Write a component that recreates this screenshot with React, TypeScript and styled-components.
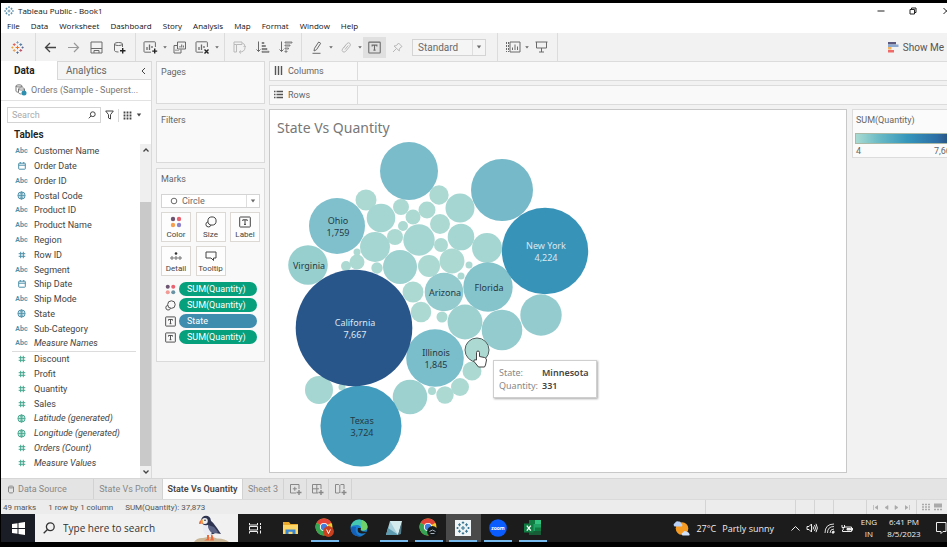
import React from "react";
import styled, { createGlobalStyle, css } from "styled-components";

const ui = `Roboto, Inter, sans-serif`;
const sys = `"Open Sans", "Noto Sans", sans-serif`;
const viz = `"Noto Sans", "Open Sans", sans-serif`;

const Global = createGlobalStyle`
  * { box-sizing: border-box; }
  body { margin: 0; background: #000; font-family: ${ui}; font-size: 9px; color: #444; }
  button, input, select { font: inherit; color: inherit; margin: 0; padding: 0; border: 0; background: none; border-radius: 0; }
  ul { margin: 0; padding: 0; list-style: none; }
  h1, h2 { margin: 0; font-weight: 400; }
  svg { display: block; flex: none; }
`;

const Screen = styled.div`
  display: flex;
  flex-direction: column;
  height: 100vh;
  min-height: 540px;
  padding: 3px 0 5px 1px;
  background: #000;
  overflow: hidden;
`;

/* ---------- title and menus ---------- */
const TitleBar = styled.header`
  display: flex;
  align-items: center;
  flex: none;
  height: 15px;
  padding-left: 3px;
  background: #fff;
  color: #111;
  font-family: ${sys};
`;
const WindowTitle = styled.h1`
  flex: 1;
  padding-left: 4px;
  font-size: 8px;
  line-height: 14px;
`;
const WindowButton = styled.button`
  display: flex;
  justify-content: center;
  width: 32px;
  flex: none;
  &:last-child { width: 18px; justify-content: flex-end; overflow: hidden; }
`;
const MenuBar = styled.nav`
  display: flex;
  align-items: center;
  gap: 11px;
  flex: none;
  height: 15px;
  padding: 0 6px;
  background: #fff;
  color: #111;
  font-family: ${sys};
  font-size: 8px;
`;
const MenuButton = styled.button`
  line-height: 14px;
`;

/* ---------- toolbar ---------- */
const Toolbar = styled.div`
  display: flex;
  flex: none;
  height: 28px;
  background: #f2f2f2;
  color: #666;
`;
const ToolGroup = styled.div<{ $lead?: boolean }>`
  display: flex;
  align-items: center;
  padding: 0 4px 0 3px;
  border-right: 1px solid #dcdcdc;
  ${(p) => p.$lead && css`padding: 0 6px 0 5px;`}
`;
const Tool = styled.button<{ $on?: boolean; $dim?: boolean }>`
  display: flex;
  align-items: center;
  justify-content: center;
  width: 23px;
  height: 21px;
  color: ${(p) => (p.$dim ? "#b9b9b9" : "#6a6a6a")};
  background: ${(p) => (p.$on ? "#e0e0e0" : "transparent")};
`;
const CaretButton = styled.button`
  display: flex;
  justify-content: center;
  width: 6px;
`;
const SelectBox = styled.div<{ $kind: "fit" | "mark" }>`
  position: relative;
  display: flex;
  align-items: center;
  border: 1px solid #d4d4d4;
  background: ${(p) => (p.$kind === "fit" ? "#f5f5f5" : "#fff")};
  color: #6a6a6a;
  ${(p) => p.$kind === "fit"
    ? css`width: 74px; height: 17px; margin: 0 7px 0 3px; font-size: 10px;`
    : css`height: 14px; margin-top: 8px;`}
`;
const Select = styled.select<{ $inset: number }>`
  appearance: none;
  flex: 1;
  min-width: 0;
  height: 100%;
  padding-left: ${(p) => p.$inset}px;
  outline: none;
`;
const SelectMark = styled.span<{ $side: "left" | "right" }>`
  position: absolute;
  top: 0;
  bottom: 0;
  ${(p) => p.$side}: 0;
  display: flex;
  align-items: center;
  justify-content: center;
  width: ${(p) => (p.$side === "left" ? 24 : 13)}px;
  border-left: ${(p) => (p.$side === "right" ? "1px solid #dedede" : "0")};
  pointer-events: none;
`;
const ShowMe = styled.button`
  display: flex;
  align-items: center;
  gap: 4px;
  margin-left: auto;
  padding-right: 3px;
  font-size: 10px;
  color: #555;
`;

/* ---------- work area ---------- */
const Work = styled.div`
  display: flex;
  flex: 1;
  min-height: 0;
  gap: 4px;
  background: #f2f2f2;
`;
const Sidebar = styled.aside`
  display: flex;
  flex-direction: column;
  flex: none;
  width: 151px;
  background: #fff;
  border-right: 1px solid #dadada;
`;
const PaneTabs = styled.div`
  display: flex;
  flex: none;
  height: 19px;
`;
const PaneTab = styled.button<{ $active?: boolean }>`
  display: flex;
  align-items: center;
  flex: ${(p) => (p.$active ? "0 0 56px" : "1")};
  padding-left: ${(p) => (p.$active ? 13 : 8)}px;
  font-size: 10px;
  font-weight: ${(p) => (p.$active ? 700 : 400)};
  color: ${(p) => (p.$active ? "#222" : "#666")};
  background: ${(p) => (p.$active ? "#fff" : "#f5f5f5")};
  border: ${(p) => (p.$active ? "0" : "1px solid #d8d8d8")};
  border-width: ${(p) => (p.$active ? "0" : "1px 0 1px 1px")};
`;
const CollapseButton = styled.button`
  display: flex;
  align-items: center;
  justify-content: center;
  width: 15px;
  background: #f5f5f5;
  border: solid #d8d8d8;
  border-width: 1px 0;
`;
const SourceButton = styled.button`
  display: flex;
  align-items: center;
  gap: 4px;
  flex: none;
  height: 21px;
  padding: 0 0 1px 13px;
  white-space: nowrap;
  color: #777;
  border-bottom: 1px solid #e2e2e2;
`;
const SearchRow = styled.div`
  display: flex;
  align-items: center;
  gap: 4px;
  flex: none;
  margin: 6px 6px 0;
  height: 16px;
`;
const SearchBox = styled.label`
  display: flex;
  align-items: center;
  width: 94px;
  height: 16px;
  padding: 0 4px;
  border: 1px solid #d4d4d4;
  input { flex: 1; min-width: 0; outline: none; }
  input::placeholder { color: #aaa; opacity: 1; }
`;
const SmallButton = styled.button`
  display: flex;
  align-items: center;
`;
const Divider = styled.span`
  width: 1px;
  height: 13px;
  background: #d8d8d8;
`;
const PaneHeading = styled.h2`
  flex: none;
  margin-top: 4px;
  padding-left: 13px;
  font-size: 10px;
  font-weight: 600;
  line-height: 15px;
  color: #222;
`;
const FieldArea = styled.div`
  display: flex;
  flex: 1;
  min-height: 0;
  margin-top: 2px;
`;
const FieldLists = styled.div`
  display: flex;
  flex-direction: column;
  flex: 1;
  padding: 0 4px 8px 11px;
`;
const FieldList = styled.ul<{ $share: number }>`
  display: flex;
  flex-direction: column;
  flex: ${(p) => p.$share} 1 0;
  & + & { border-top: 1px solid #dcdcdc; }
`;
const Field = styled.li<{ $measure?: boolean; $italic?: boolean }>`
  display: flex;
  align-items: center;
  flex: 1 1 0;
  min-height: 0;
  line-height: 14px;
  white-space: nowrap;
  font-style: ${(p) => (p.$italic ? "italic" : "normal")};
  > span { display: flex; justify-content: center; flex: none; width: 19px; margin-right: 3px; font-style: normal; color: ${(p) => (p.$measure ? "#3fa58c" : "#4a8fa8")}; }
`;
const AbcMark = styled.b`
  font-size: 7px;
  font-weight: 600;
`;
const ScrollTrack = styled.div`
  display: flex;
  flex-direction: column;
  flex: none;
  width: 11px;
  background: #efefef;
`;
const ScrollButton = styled.button`
  display: flex;
  align-items: center;
  justify-content: center;
  height: 12px;
  flex: none;
`;
const ScrollThumb = styled.div`
  flex: 1;
  margin-top: 46px;
  background: #c9c9c9;
`;

const CardColumn = styled.div`
  display: flex;
  flex-direction: column;
  gap: 5px;
  flex: none;
  width: 109px;
`;
const Card = styled.section<{ $size: number }>`
  flex: none;
  min-height: ${(p) => p.$size}px;
  padding: 3px 4px;
  border: 1px solid #dadada;
  background: #f9f9f9;
`;
const CardTitle = styled.h2`
  font-size: 9px;
  line-height: 14px;
  color: #666;
`;
const MarkGrid = styled.div`
  display: grid;
  grid-template-columns: repeat(3, 30px);
  justify-content: space-between;
  row-gap: 4px;
  margin: 4px 0 5px;
`;
const MarkButton = styled.button`
  display: flex;
  flex-direction: column;
  align-items: center;
  justify-content: space-between;
  height: 30px;
  padding-top: 3px;
  border: 1px solid #dcd8d4;
  background: #fdfdfd;
  font-size: 8px;
  line-height: 12px;
`;
const PillRow = styled.li`
  display: flex;
  align-items: center;
  gap: 3px;
  height: 16px;
  padding-left: 4px;
`;
const Pill = styled.button<{ $blue?: boolean }>`
  flex: 0 0 78px;
  height: 14px;
  padding-left: 8px;
  border-radius: 7px;
  text-align: left;
  font-size: 9px;
  color: #fff;
  background: ${(p) => (p.$blue ? "#3e8cae" : "#06a07c")};
`;

const Main = styled.main`
  display: flex;
  flex-direction: column;
  flex: 1;
  min-width: 0;
`;
const Shelf = styled.div`
  display: flex;
  flex: none;
  height: 20px;
  margin-bottom: 4px;
  border: 1px solid #dcdcdc;
  border-right: 0;
  background: #f9f9f9;
`;
const ShelfLabel = styled.div`
  display: flex;
  align-items: center;
  gap: 5px;
  width: 88px;
  padding: 0 0 1px 4px;
  border-right: 1px solid #dcdcdc;
  color: #666;
`;
const ViewRow = styled.div`
  display: flex;
  flex: 1;
  min-height: 0;
  gap: 5px;
  padding-bottom: 5px;
`;
const Canvas = styled.section`
  position: relative;
  flex: 1;
  min-width: 0;
  border: 1px solid #c8c8c8;
  background: #fff;
  overflow: hidden;
`;
const Chart = styled.svg`
  position: absolute;
  inset: 0;
  width: 100%;
  height: 100%;
  font-family: ${viz};
  font-size: 9px;
`;
const SheetTitle = styled.h2`
  padding: 8px 7px;
  font-family: ${viz};
  font-size: 14px;
  line-height: 19px;
  color: #777;
`;
const Tooltip = styled.dl`
  position: absolute;
  left: 223px;
  top: 250px;
  display: grid;
  grid-template-columns: 40px auto;
  column-gap: 3px;
  width: 104px;
  margin: 0;
  padding: 5px;
  border: 1px solid #cfcfcf;
  background: #fff;
  box-shadow: 1px 1px 2px #aaa;
  font-family: ${viz};
  line-height: 13px;
  white-space: nowrap;
  color: #888;
  dd { margin: 0; font-weight: 600; color: #444; }
`;
const Legend = styled.div`
  flex: none;
  width: 95px;
  overflow: hidden;
`;
const LegendCard = styled.section`
  width: 108px;
  height: 49px;
  padding: 3px;
  border: 1px solid #dcdcdc;
  background: #fbfbfb;
  color: #666;
`;
const Ramp = styled.div`
  height: 11px;
  margin: 6px 0 1px -1px;
  border: 1px solid #a9b9a5;
  background: linear-gradient(90deg, #a8dbd2, #6cbcc6 22%, #3596bb 52%, #2c6ea5 82%, #26456e);
`;
const RampScale = styled.div`
  display: flex;
  justify-content: space-between;
  line-height: 12px;
`;

/* ---------- sheet tabs and status ---------- */
const SheetTabs = styled.nav`
  display: flex;
  flex: none;
  height: 21px;
  background: #e4e4e4;
  border-top: 1px solid #d6d6d6;
`;
const SheetTab = styled.button<{ $w: number; $active?: boolean; $left?: boolean }>`
  display: flex;
  align-items: center;
  justify-content: ${(p) => (p.$left ? "flex-start" : "center")};
  gap: 3px;
  width: ${(p) => p.$w}px;
  padding-left: ${(p) => (p.$left ? 6 : 0)}px;
  border-right: 1px solid #d2d2d2;
  white-space: nowrap;
  font-weight: ${(p) => (p.$active ? 600 : 400)};
  color: ${(p) => (p.$active ? "#444" : "#888")};
  background: ${(p) => (p.$active ? "#fcfcfc" : "transparent")};
`;
const StatusBar = styled.footer`
  display: flex;
  align-items: center;
  flex: none;
  height: 15px;
  padding-left: 2px;
  gap: 12px;
  background: #ececec;
  border-top: 1px solid #dadada;
  font-size: 8px;
  color: #555;
`;
const StatusCells = styled.div`
  display: flex;
  align-self: stretch;
  margin-left: auto;
`;
const StatusCell = styled.div<{ $w: number }>`
  display: flex;
  align-items: center;
  justify-content: space-evenly;
  width: ${(p) => p.$w}px;
  border-left: 1px solid #d4d4d4;
  color: #aaa;
`;

/* ---------- desktop taskbar ---------- */
const Taskbar = styled.div`
  display: flex;
  flex: none;
  height: 28px;
  background: #1c1c1c;
  color: #eee;
  font-family: ${sys};
`;
const StartButton = styled.button`
  display: flex;
  align-items: center;
  justify-content: center;
  width: 34px;
  background: #1a1d26;
`;
const TaskSearch = styled.label`
  display: flex;
  align-items: center;
  gap: 8px;
  width: 203px;
  padding-left: 8px;
  background: #f1f1f1;
  color: #333;
  input { flex: 1; min-width: 0; font-size: 10px; outline: none; }
  input::placeholder { color: #333; opacity: 1; }
  > svg:last-child { align-self: flex-end; margin-right: 8px; }
`;
const TaskApp = styled.button<{ $running?: boolean; $active?: boolean }>`
  display: flex;
  align-items: center;
  justify-content: center;
  flex: 1 1 0;
  background:
    linear-gradient(${(p) => (p.$running ? "#76b9ed, #76b9ed" : "transparent, transparent")}) center bottom / 28px 2px no-repeat,
    ${(p) => (p.$active ? "#4a4a4a" : "transparent")};
`;
const TaskApps = styled.div`
  display: flex;
  width: 312px;
`;
const Tray = styled.div`
  display: flex;
  align-items: center;
  gap: 6px;
  margin-left: auto;
`;
const TrayButton = styled.button`
  display: flex;
  align-items: center;
  gap: 6px;
  font-size: 9px;
  white-space: nowrap;
`;
const TrayStack = styled.button<{ $w: number }>`
  width: ${(p) => p.$w}px;
  font-size: 8px;
  line-height: 12px;
  text-align: center;
  white-space: nowrap;
`;

/* ---------- icons ---------- */
type IcoProps = { w?: number; h?: number; sw?: number; children: React.ReactNode };
const Ico = ({ w = 16, h = w, sw = 1, children }: IcoProps) => (
  <svg width={w} height={h} viewBox={`0 0 ${w} ${h}`} fill="none" stroke="currentColor" strokeWidth={sw} aria-hidden="true">
    {children}
  </svg>
);
const Caret = () => (
  <Ico w={6} h={4}><path d="M.8.5h4.4L3 3.6z" fill="currentColor" stroke="none" /></Ico>
);
const TinyCaret = () => (
  <Ico w={4} h={3}><path d="M.2.2h3.6L2 2.6z" fill="currentColor" stroke="none" /></Ico>
);
const Cross = ({ x, y, r, c }: { x: number; y: number; r: number; c: string }) => (
  <path d={`M${x - r} ${y}h${r * 2}M${x} ${y - r}v${r * 2}`} stroke={c} />
);
const TableauLogo = ({ size = 14, mono }: { size?: number; mono?: string }) => (
  <svg width={size} height={size} viewBox="0 0 14 14" strokeWidth="1.1" aria-hidden="true">
    <Cross x={7} y={7} r={2} c={mono ?? "#e8762b"} />
    <Cross x={3.5} y={3.8} r={1.5} c={mono ?? "#e0635b"} />
    <Cross x={10.5} y={3.8} r={1.5} c={mono ?? "#5c7fa3"} />
    <Cross x={3.5} y={10.2} r={1.5} c={mono ?? "#e9a25f"} />
    <Cross x={10.5} y={10.2} r={1.5} c={mono ?? "#c0576c"} />
    <Cross x={7} y={1.6} r={1.2} c={mono ?? "#7d9cc0"} />
    <Cross x={7} y={12.4} r={1.2} c={mono ?? "#4f6a94"} />
    <Cross x={1.5} y={7} r={1.1} c={mono ?? "#e8a13b"} />
    <Cross x={12.5} y={7} r={1.1} c={mono ?? "#5b6591"} />
  </svg>
);
const TextMark = ({ size = 12 }: { size?: number }) => (
  <svg width={size} height={size} viewBox="0 0 12 12" fill="none" stroke="currentColor" aria-hidden="true">
    <rect x=".7" y="1" width="10.6" height="10" rx=".6" />
    <path d="M3.8 5V3.8h4.4V5M6 3.8v4.6M5 8.4h2" />
  </svg>
);
const ColorDots = ({ size = 12, soft }: { size?: number; soft?: boolean }) => (
  <svg width={size} height={size} viewBox="0 0 12 12" aria-hidden="true">
    <circle cx="3" cy="3" r="2.2" fill="#6d5470" />
    <circle cx="9" cy="3" r="2.2" fill="#e8636f" />
    <circle cx="3" cy="9" r="2.2" fill={soft ? "#f29a94" : "#f5a04f"} />
    <circle cx="9" cy="9" r="2.2" fill={soft ? "#6a92a5" : "#8c82c9"} />
  </svg>
);
const SizeMark = ({ size = 12 }: { size?: number }) => (
  <svg width={size} height={size} viewBox="0 0 12 12" fill="none" stroke="currentColor" aria-hidden="true">
    <circle cx="7" cy="5" r="4.1" />
    <path d="M3 5.8A2.6 2.6 0 1 0 6 9" />
  </svg>
);
const Hash = () => (
  <Ico w={8}><path d="M2.7.8v6.4M5.3.8v6.4M.7 2.7h6.6M.7 5.3h6.6" /></Ico>
);
const Globe = () => (
  <Ico w={9}><circle cx="4.5" cy="4.5" r="3.6" /><ellipse cx="4.5" cy="4.5" rx="1.5" ry="3.6" strokeWidth=".8" /><path d="M1 4.5h7M4.5 1v7" strokeWidth=".8" /></Ico>
);
const Calendar = () => (
  <Ico w={8}><rect x=".7" y="1.2" width="6.6" height="6" rx=".5" /><path d="M.7 3.2h6.6M2.3 0v1.5M5.7 0v1.5" /></Ico>
);
const ChartBox = ({ clear }: { clear?: boolean }) => (
  <Ico w={15}>
    <path d="M8 12.2H1.7a.7.7 0 0 1-.7-.7v-9a.7.7 0 0 1 .7-.7h10a.7.7 0 0 1 .7.7V7" />
    <path d="M4 10V7M6.5 10V4.5M9 8V6" strokeWidth="1.3" />
    {clear ? <path d="m9.5 9.5 4 4m0-4-4 4" stroke="#222" strokeWidth="1.4" /> : <path d="M11.7 8.6v5M9.2 11.1h5" stroke="#222" strokeWidth="1.4" />}
  </Ico>
);
const SheetPlus = ({ kind }: { kind: 0 | 1 | 2 }) => (
  <Ico w={13}>
    {kind === 0 && <path d="M7 10H1.5V1.5H10V6M3.8 5.8h4M5.8 3.8v4" />}
    {kind === 1 && <path d="M7 10H1.5V1.5H10V6M1.5 5.8H8M5.8 1.5V10" />}
    {kind === 2 && <path d="M6.5 10 5.8 9.3 5 10H1.5V1.5h3.3l1 1 1-1H10V6M5.8 2.5v7" />}
    <path d="M10 7v5M7.5 9.5h5" strokeWidth="1.4" />
  </Ico>
);
const Chrome = ({ badge, label }: { badge: string; label: "v" | "cap" }) => (
  <Ico w={20}>
    <g stroke="none">
      <circle cx="9" cy="9" r="8.5" fill="#f7c72e" />
      <path d="M9 9 1.6 4.8A8.5 8.5 0 0 1 16.4 4.8z" fill="#e2443a" />
      <path d="M1.6 4.8A8.5 8.5 0 0 0 8.6 17.5L12 11z" fill="#36a354" />
      <circle cx="9" cy="9" r="4.1" fill="#fff" />
      <circle cx="9" cy="9" r="3.2" fill="#3f7de0" />
      <circle cx="13.5" cy="13.5" r="5.4" fill={badge} />
    </g>
    {label === "v" ? <path d="m11.6 11.5 1.9 4 1.9-4" stroke="#fff" /> : <path d="M10.5 13.5 13.5 12l3 1.5M11.5 15.5h4" stroke="#a8b4bc" />}
  </Ico>
);

/* ---------- data ---------- */
type FieldDef = [kind: "abc" | "date" | "geo" | "num", name: string, italic?: boolean];
const dimensions: FieldDef[] = [
  ["abc", "Customer Name"], ["date", "Order Date"], ["abc", "Order ID"], ["geo", "Postal Code"],
  ["abc", "Product ID"], ["abc", "Product Name"], ["abc", "Region"], ["num", "Row ID"],
  ["abc", "Segment"], ["date", "Ship Date"], ["abc", "Ship Mode"], ["geo", "State"],
  ["abc", "Sub-Category"], ["abc", "Measure Names", true],
];
const measures: FieldDef[] = [
  ["num", "Discount"], ["num", "Profit"], ["num", "Quantity"], ["num", "Sales"],
  ["geo", "Latitude (generated)", true], ["geo", "Longitude (generated)", true],
  ["num", "Orders (Count)", true], ["num", "Measure Values", true],
];
const glyph = { abc: <AbcMark>Abc</AbcMark>, date: <Calendar />, geo: <Globe />, num: <Hash /> };

type Bubble = { x: number; y: number; r: number; c: string; name?: string; qty?: string; light?: boolean };
const small = ([x, y, r]: number[]): Bubble => ({
  x, y, r, c: r > 19 ? "#93cbce" : r > 16 ? "#9dd1d0" : r > 13 ? "#a5d6d1" : "#acdad3",
});
const bubbles: Bubble[] = [
  ...[
    [96, 90, 10.5], [111, 108, 14.3], [131, 97, 8], [143, 107, 7.5], [157, 100, 8.5], [169, 85, 9.7],
    [133, 116, 5], [125, 127, 8], [149, 130, 15.7], [105, 137, 15], [170, 114, 10], [171, 135, 7],
    [159, 156, 11], [130, 157, 17], [107, 158, 5.7], [87, 152, 7.5], [87, 142, 3.5], [76, 156, 5],
    [190, 98, 14.5], [191, 127, 13.3], [182, 151, 12.5], [199, 155, 3.5], [191, 166, 3.5], [217, 138, 15],
    [143, 182, 10.5], [151, 202, 10.3], [172, 207, 5.5], [195, 212, 17.4], [232, 220, 20.3], [271, 205, 20.7],
    [202, 261, 9.5], [190, 277, 9], [175, 285, 8.7], [162, 281, 4], [140, 287, 17.3], [49, 280, 14], [72, 277, 3.5],
  ].map(small),
  { x: 139, y: 61, r: 29, c: "#7bbccb" },
  { x: 232, y: 80, r: 31, c: "#76b9c8" },
  { x: 38, y: 155, r: 19.8, c: "#97cfce", name: "Virginia" },
  { x: 174, y: 182, r: 19.3, c: "#93cbce", name: "Arizona" },
  { x: 218, y: 177, r: 24.7, c: "#86c4cc", name: "Florida" },
  { x: 67, y: 116, r: 28, c: "#7fc0cc", name: "Ohio", qty: "1,759" },
  { x: 165, y: 248, r: 28.8, c: "#7abdcb", name: "Illinois", qty: "1,845" },
  { x: 275, y: 141, r: 43.2, c: "#3893b9", name: "New York", qty: "4,224", light: true },
  { x: 91, y: 316, r: 40.5, c: "#419cbd", name: "Texas", qty: "3,724" },
  { x: 84, y: 218, r: 58.3, c: "#29568a", name: "California", qty: "7,667", light: true },
];

const Fields = ({ items, measure }: { items: FieldDef[]; measure?: boolean }) => (
  <FieldList $share={items.length}>
    {items.map(([kind, name, italic]) => (
      <Field key={name} $measure={measure} $italic={italic}><span>{glyph[kind]}</span>{name}</Field>
    ))}
  </FieldList>
);

const BubbleChart = () => (
  <Chart role="img" aria-label="Quantity by state">
    {bubbles.map((b) => <circle key={`${b.x}-${b.y}`} cx={b.x} cy={b.y} r={b.r} fill={b.c} />)}
    <circle cx="207" cy="240" r="12" fill="#acdad3" stroke="#52605f" />
    {bubbles.filter((b) => b.name).map((b) => (
      <text key={b.name} textAnchor="middle" fill={b.light ? "#dce8f0" : "#253a45"}>
        <tspan x={b.x + 1} y={b.y + (b.qty ? -2 : 4)}>{b.name}</tspan>
        {b.qty && <tspan x={b.x + 1} y={b.y + 10}>{b.qty}</tspan>}
      </text>
    ))}
    <path d="M206.500 250v-7.500q0-1.500 1.500-1.500t1.500 1.500v4l5 1q2 .6 2 2.500l-1 5-1 2h-6l-4.500-5.500q-.5-1.700 1-1.700z" fill="#fff" stroke="#444" />
  </Chart>
);

const menus = ["File", "Data", "Worksheet", "Dashboard", "Story", "Analysis", "Map", "Format", "Window", "Help"];

export default function App() {
  return (
    <Screen>
      <Global />
      <TitleBar>
        <TableauLogo size={10} mono="#4f88a8" />
        <WindowTitle>Tableau Public - Book1</WindowTitle>
        <WindowButton aria-label="Minimize"><Ico w={8}><path d="M.5 4h7" stroke="#222" /></Ico></WindowButton>
        <WindowButton aria-label="Restore"><Ico w={8}><path d="M1 2.500h4.500V7H1zM2.500 2.500V1H7v4.500H5.500" stroke="#222" /></Ico></WindowButton>
        <WindowButton aria-label="Close"><Ico w={4} h={8}><path d="m.5 1 6 6m0-6-6 6" stroke="#222" /></Ico></WindowButton>
      </TitleBar>
      <MenuBar>{menus.map((m) => <MenuButton key={m}>{m}</MenuButton>)}</MenuBar>

      <Toolbar>
        <ToolGroup $lead><Tool aria-label="Start page"><TableauLogo size={13} /></Tool></ToolGroup>
        <ToolGroup>
          <Tool aria-label="Undo"><Ico w={13} sw={1.3}><path d="M12 6.500H1.500M6 2 1.500 6.500 6 11" stroke="#444" /></Ico></Tool>
          <Tool $dim aria-label="Redo"><Ico w={13} sw={1.2}><path d="M1 6.500h10.500M7 2l4.500 4.500L7 11" stroke="#999" /></Ico></Tool>
          <Tool aria-label="Save"><Ico w={13}><path d="M1 1h11v11H1zM1 7.500h11M4 12V9.500h5V12" /></Ico></Tool>
          <Tool aria-label="New data source"><Ico w={13}><path d="M9.500 6V3M1.500 3v6.500c0 .8 1.700 1.500 4 1.500M1.500 3c0-2 8-2 8 0s-8 2-8 0z" /><path d="M9.700 7v5.500M7 9.700h5.500" stroke="#222" strokeWidth="1.4" /></Ico></Tool>
        </ToolGroup>
        <ToolGroup>
          <Tool aria-label="New worksheet"><ChartBox /></Tool>
          <CaretButton aria-label="New worksheet options"><TinyCaret /></CaretButton>
          <Tool aria-label="Duplicate"><Ico w={13}><path d="M4.500 8V1h8v7zM4 4.500H1V12h7V8.500M7 6.500V5M8.700 6.500v-3M10.400 6.500V4.500M3 10V8.500M5 10V9" /></Ico></Tool>
          <Tool aria-label="Clear sheet"><ChartBox clear /></Tool>
          <CaretButton aria-label="Clear options"><TinyCaret /></CaretButton>
        </ToolGroup>
        <ToolGroup>
          <Tool $dim aria-label="Swap rows and columns"><Ico w={13}><path d="M3.500 3.500H1V1h8v2.500zM3.500 3.500V11H1V3.500M9.500 2.200Q12 2.500 12 6M10.500 5l1.500 1.500L13 5M12 7q-.5 4-5.500 4M8 9.500 6.300 11 8 12.500" /></Ico></Tool>
          <Tool aria-label="Sort ascending"><Ico w={14} h={12}><path d="M2.500.5v10M.5 8.500l2 2 2-2" /><path d="M6 1.500h2v1H6zM6 4.500h3.500v1H6zM6 7.500h5v1H6zM6 10.300h7v1H6z" strokeWidth=".8" /></Ico></Tool>
          <Tool aria-label="Sort descending"><Ico w={14} h={12}><path d="M2.500.5v10M.5 8.500l2 2 2-2" /><path d="M6 1h7v1H6zM6 4h5v1H6zM6 7h3.500v1H6zM6 10h2v1H6z" strokeWidth=".8" /></Ico></Tool>
        </ToolGroup>
        <ToolGroup>
          <Tool aria-label="Highlight"><Ico w={12} h={13}><path d="M1.500 12.300h8M3 10l.5-2.700L7.700 1l2 1.300L5.500 8.700z" /></Ico></Tool>
          <CaretButton aria-label="Highlight options"><TinyCaret /></CaretButton>
          <Tool $dim aria-label="Group members"><Ico w={12}><path d="M3.500 7 7 2.500q1.700-1.500 3 0 1 1.400-.2 2.800L5.500 10.500q-1.500 1.200-2.700.2Q1.500 9.500 2.500 8L6 3.800M5 8.500 8.200 4.500" /></Ico></Tool>
          <CaretButton aria-label="Group options"><TinyCaret /></CaretButton>
          <Tool $on aria-label="Show mark labels"><TextMark size={13} /></Tool>
          <Tool $dim aria-label="Pin axes"><Ico w={11}><path d="m6.500 1 3.500 3.500-1 .5-1.700 2v2L2 4l2-.3L6 2zM4.300 6.700 1 10" /></Ico></Tool>
          <SelectBox $kind="fit">
            <Select $inset={5} aria-label="Fit" defaultValue="Standard"><option>Standard</option></Select>
            <SelectMark $side="right"><Caret /></SelectMark>
          </SelectBox>
        </ToolGroup>
        <ToolGroup>
          <Tool aria-label="Show or hide cards"><Ico w={16} h={12}><path d="M5 1h10v10H5zM7.500 9V6.500M10 9V3.500M12.500 9V5.500" /><path d="M1.500 1v10M3.500 1v10" strokeDasharray="2 1" /></Ico></Tool>
          <CaretButton aria-label="Card options"><TinyCaret /></CaretButton>
          <Tool aria-label="Presentation mode"><Ico w={13} h={12}><path d="M.5 1h12M1.500 1v6h10V1M6.500 7v4M4 11h5" /></Ico></Tool>
        </ToolGroup>
        <ShowMe>
          <Ico w={11} h={12}><g stroke="none"><path d="M0 1h8v2.500H0z" fill="#5d5a80" /><path d="M0 3.500h10.500V6H0z" fill="#8ea9d0" /><path d="M0 6h3.500v2.500H0z" fill="#f3b25e" /><path d="M0 9h6v2.500H0z" fill="#ee6a68" /></g></Ico>
          Show Me
        </ShowMe>
      </Toolbar>

      <Work>
        <Sidebar>
          <PaneTabs>
            <PaneTab $active>Data</PaneTab>
            <PaneTab>Analytics</PaneTab>
            <CollapseButton aria-label="Collapse pane"><Ico w={5} h={8}><path d="M4 1 1 4l3 3" /></Ico></CollapseButton>
          </PaneTabs>
          <SourceButton>
            <Ico w={13}><path d="M2 8V3c0-1.500 6-1.500 6 0v1M2 3c0 1.300 6 1.300 6 0M2 8c0 .8 1 1 2 1.200M4.500 6v3.500c0 1 2 1.500 3 1.500M4.500 6c0-1.500 6-1.500 6 0s-6 1.300-6 0M10.500 6v2" /><circle cx="10" cy="10" r="2.5" fill="#2c8fb0" stroke="none" /></Ico>
            Orders (Sample - Superst...
          </SourceButton>
          <SearchRow>
            <SearchBox>
              <input placeholder="Search" aria-label="Search fields" />
              <Ico w={8}><circle cx="4.8" cy="3.2" r="2.4" /><path d="M3 5 .8 7.300" /></Ico>
            </SearchBox>
            <SmallButton aria-label="Filter fields"><Ico w={9} h={10}><path d="M.7 1h7.600L5.500 4.700V9L3.500 8V4.700z" /></Ico></SmallButton>
            <Divider />
            <SmallButton aria-label="View options"><Ico w={9}><path d="M1.500.5v8M4.500.5v8M7.500.5v8" strokeWidth="1.8" strokeDasharray="2 1" /></Ico></SmallButton>
            <SmallButton aria-label="More"><Caret /></SmallButton>
          </SearchRow>
          <PaneHeading>Tables</PaneHeading>
          <FieldArea>
            <FieldLists>
              <Fields items={dimensions} />
              <Fields items={measures} measure />
            </FieldLists>
            <ScrollTrack>
              <ScrollButton aria-label="Scroll up"><Ico w={6} h={4} sw={1.3}><path d="M.5 3.500 3 1l2.500 2.500" /></Ico></ScrollButton>
              <ScrollThumb />
              <ScrollButton aria-label="Scroll down"><Ico w={6} h={4} sw={1.3}><path d="M.5.5 3 3 5.500.5" /></Ico></ScrollButton>
            </ScrollTrack>
          </FieldArea>
        </Sidebar>

        <CardColumn>
          <Card $size={43}><CardTitle>Pages</CardTitle></Card>
          <Card $size={54}><CardTitle>Filters</CardTitle></Card>
          <Card $size={194}>
            <CardTitle>Marks</CardTitle>
            <SelectBox $kind="mark">
              <SelectMark $side="left"><Ico w={8}><circle cx="4" cy="4" r="2.8" /></Ico></SelectMark>
              <Select $inset={20} aria-label="Mark type" defaultValue="Circle"><option>Circle</option></Select>
              <SelectMark $side="right"><Caret /></SelectMark>
            </SelectBox>
            <MarkGrid>
              <MarkButton><ColorDots />Color</MarkButton>
              <MarkButton><SizeMark />Size</MarkButton>
              <MarkButton><TextMark />Label</MarkButton>
              <MarkButton><Ico w={12}><circle cx="6" cy="3.5" r="1.3" fill="#333" stroke="none" /><circle cx="2" cy="8" r="1.2" strokeWidth=".8" /><circle cx="6" cy="8" r="1.2" strokeWidth=".8" /><circle cx="10" cy="8" r="1.2" strokeWidth=".8" /></Ico>Detail</MarkButton>
              <MarkButton><Ico w={12}><path d="M1 2h10v6H8.500v2.500L6 8H1z" /></Ico>Tooltip</MarkButton>
            </MarkGrid>
            <ul>
              <PillRow><ColorDots size={11} soft /><Pill>SUM(Quantity)</Pill></PillRow>
              <PillRow><SizeMark size={11} /><Pill>SUM(Quantity)</Pill></PillRow>
              <PillRow><TextMark size={11} /><Pill $blue>State</Pill></PillRow>
              <PillRow><TextMark size={11} /><Pill>SUM(Quantity)</Pill></PillRow>
            </ul>
          </Card>
        </CardColumn>

        <Main>
          <Shelf><ShelfLabel><Ico w={9}><path d="M1.500 0v9M4.500 0v9M7.500 0v9" stroke="#555" strokeWidth="1.4" /></Ico>Columns</ShelfLabel></Shelf>
          <Shelf><ShelfLabel><Ico w={9}><path d="M0 1.500h1.500M0 4.500h1.500M0 7.500h1.500M2.500 1.500H9M2.500 4.500H9M2.500 7.500H9" stroke="#555" strokeWidth="1.4" /></Ico>Rows</ShelfLabel></Shelf>
          <ViewRow>
            <Canvas>
              <BubbleChart />
              <SheetTitle>State Vs Quantity</SheetTitle>
              <Tooltip><dt>State:</dt><dd>Minnesota</dd><dt>Quantity:</dt><dd>331</dd></Tooltip>
            </Canvas>
            <Legend>
              <LegendCard>
                <CardTitle>SUM(Quantity)</CardTitle>
                <Ramp />
                <RampScale><span>4</span><span>7,667</span></RampScale>
              </LegendCard>
            </Legend>
          </ViewRow>
        </Main>
      </Work>

      <SheetTabs>
        <SheetTab $w={93} $left><Ico w={8} h={9}><path d="M1.500 2v5c0 1.300 5 1.300 5 0V2c0-1.300-5-1.300-5 0s5 1.300 5 0" /></Ico>Data Source</SheetTab>
        <SheetTab $w={69}>State Vs Profit</SheetTab>
        <SheetTab $w={80} $active>State Vs Quantity</SheetTab>
        <SheetTab $w={41}>Sheet 3</SheetTab>
        <SheetTab $w={23} aria-label="New worksheet"><SheetPlus kind={0} /></SheetTab>
        <SheetTab $w={22} aria-label="New dashboard"><SheetPlus kind={1} /></SheetTab>
        <SheetTab $w={23} aria-label="New story"><SheetPlus kind={2} /></SheetTab>
      </SheetTabs>
      <StatusBar>
        <span>49 marks</span><span>1 row by 1 column</span><span>SUM(Quantity): 37,873</span>
        <StatusCells>
          <StatusCell $w={90} /><StatusCell $w={19} /><StatusCell $w={19} /><StatusCell $w={33} />
          <StatusCell $w={50}>
            <Ico w={5}><path d="M.5 0v5M5 .5 2 2.500l3 2z" fill="currentColor" strokeWidth=".6" /></Ico>
            <Ico w={5}><path d="M4 .5 1 2.500l3 2z" fill="currentColor" strokeWidth=".6" /></Ico>
            <Ico w={5}><path d="M1 .5 4 2.500l-3 2z" fill="currentColor" strokeWidth=".6" /></Ico>
            <Ico w={5}><path d="M4.500 0v5M0 .5 3 2.500l-3 2z" fill="currentColor" strokeWidth=".6" /></Ico>
          </StatusCell>
          <StatusCell $w={31}>
            <Ico w={8}><path d="M0 1.500h8M0 4h8M0 6.500h8" strokeWidth="1.7" strokeDasharray="2 1" /></Ico>
            <Ico w={8}><path d="M0 2.500h8" strokeWidth="4" /><path d="M0 6.500h8" strokeWidth="1.5" strokeDasharray="2 1" /></Ico>
          </StatusCell>
        </StatusCells>
      </StatusBar>

      <Taskbar>
        <StartButton aria-label="Start"><Ico w={13}><path d="M0 2 5.500 1.200V6H0zM6.500 1 13 0v6H6.500zM0 7h5.500v4.800L0 11zM6.500 7H13v6l-6.500-1z" fill="#fff" stroke="none" /></Ico></StartButton>
        <TaskSearch>
          <Ico w={12} sw={1.3}><circle cx="7.3" cy="4.7" r="3.9" /><path d="M4.500 7.500.7 11.300" /></Ico>
          <input placeholder="Type here to search" aria-label="Type here to search" />
          <Ico w={36} h={27}>
            <g stroke="none">
              <path d="M0 27q3-4.500 9-4 8-2 14 .5 7-.5 12 3.500z" fill="#c9b798" />
              <path d="M13 8q0 9 3 11 3 1 5-1l6 1-4-6Q20 8 15 4z" fill="#2f3550" />
              <path d="M9 9q-1 8 3 11 4 1 6-2-4-4-4-9z" fill="#e9eaf2" />
              <path d="M14 10q0 6 5 8 4 1 5-1l-4-5z" fill="#5c6486" />
              <circle cx="12" cy="5.5" r="4.8" fill="#2f3550" />
              <circle cx="10.8" cy="6" r="3" fill="#eceef4" />
              <path d="M8.500 4.500Q5 5 5 9l4-.5z" fill="#e8703a" />
              <path d="M7.600 4.900 7.300 8.700l1.200-.2.200-3.900z" fill="#f3c04c" />
              <circle cx="11" cy="5.2" r=".8" fill="#222" />
              <path d="M13 20v4l-3 1.500h5L15 20zM17 20v4l-2 1.500h5L18.500 20z" fill="#ee6a3a" />
            </g>
          </Ico>
        </TaskSearch>
        <TaskApps>
          <TaskApp aria-label="Task view"><Ico w={13} h={12}><path d="M.5 1v2h8V1M.5 4.500h8v3.500h-8zM.5 11.500v-2h8v2M11.500 1v2M11.500 4v3M11.500 8.500v3" /></Ico></TaskApp>
          <TaskApp aria-label="File Explorer"><Ico w={17} h={14}><g stroke="none"><path d="M1 1h6l1.500 2H16v10H1z" fill="#eaa92c" /><path d="M1 4h15v9H1z" fill="#fcd667" /><path d="M3.500 13V8.500h10V13h-3v-2.300h-4V13z" fill="#3b86d0" /></g></Ico></TaskApp>
          <TaskApp $running aria-label="Chrome, profile V"><Chrome badge="#c9401e" label="v" /></TaskApp>
          <TaskApp aria-label="Edge"><Ico w={18}><g stroke="none"><circle cx="9" cy="9" r="8.5" fill="#1c7fd0" /><path d="M.7 8Q2 .5 9.500.5q7.500.5 8 7.500-.5 3.500-4.500 3.500-2.500-.2-2-2 0-3.500-4-3.500Q3 6 .7 8z" fill="#45c9b0" /><path d="M12 1q5.500 2 5.500 7-.5 3.500-4.500 3.500-2.500-.2-2-2z" fill="#70d36a" /><path d="M6 8q-2 8 6 9.200-9 1.500-11-6.200Q.5 7 6 8z" fill="#1560b8" /><path d="M8 9q-1.500 5 3.500 5.500 3 .2 5.500-1.200-2-1-4-.8-3.500-.5-2-3.500z" fill="#1c1c1c" /></g></Ico></TaskApp>
          <TaskApp $running aria-label="Notepad"><Ico w={18} h={17}><g stroke="none"><path d="M5 1h12l-4 14H1z" fill="#a5cfda" /><path d="m5 1 12 0-4 14z" fill="#d4ebee" /><path d="m3 8 9 6 1 1H1z" fill="#5c9bb0" /><path d="m17 1-4 14 3-1z" fill="#517b88" /></g></Ico></TaskApp>
          <TaskApp $running aria-label="Chrome, second profile"><Chrome badge="#14191c" label="cap" /></TaskApp>
          <TaskApp $running $active aria-label="Tableau Public"><Ico w={16}><rect width="16" height="16" fill="#eff5f7" stroke="none" /><g transform="translate(1 1)"><TableauLogo mono="#3b7793" /></g></Ico></TaskApp>
          <TaskApp $running aria-label="Zoom"><Ico w={18}><circle cx="9" cy="9" r="8.8" fill="#0b5cff" stroke="none" /><text x="9" y="10.5" textAnchor="middle" fontSize="5" fontWeight="700" fill="#fff" stroke="none">zoom</text></Ico></TaskApp>
          <TaskApp $running aria-label="Excel"><Ico w={18} h={16}><g stroke="none"><path d="M5 0h12v15H5z" fill="#21a366" /><path d="M5 0h6v4H5zM11 7.500h6V15h-6z" fill="#107c41" /><path d="M11 0h6v4h-6z" fill="#33c481" /><path d="M5 11h12v4H5z" fill="#185c37" /><path d="M0 3.500h9.500v9H0z" fill="#107c41" /></g><path d="m2.800 5.700 4 5m0-5-4 5" stroke="#fff" strokeWidth="1.3" /></Ico></TaskApp>
        </TaskApps>
        <Tray>
          <TrayButton>
            <Ico w={17}><g stroke="none"><circle cx="9" cy="8.5" r="6.3" fill="#f59b23" /><path d="M1.500 6.500q-2-2 .5-3.500Q3 .5 5.500 1.500 8 1 8 3.500q2 .5 1 3z" fill="#b9d1f6" /><path d="M9.500 15.500q-2-2 .5-3 1-2.500 3.500-1 2.500.5 3 2.500.5 1-.5 1.500z" fill="#cfe0fa" /></g></Ico>
            <span>27°C</span><span>Partly sunny</span>
          </TrayButton>
          <TrayButton aria-label="Hidden icons"><Ico w={20} h={8}><path d="m11.500 6.500 4-4 4 4" /></Ico></TrayButton>
          <TrayButton aria-label="Volume"><Ico w={12}><path d="M1 4.500h2L5.500 2v8L3 7.500H1zM7 4.500q1 1.500 0 3M8.500 3q2 3 0 6M10 1.800q2.800 4.200 0 8.400" /></Ico></TrayButton>
          <TrayButton aria-label="Network"><Ico w={11}><path d="M1 10Q1 1 10 1M3.500 10q0-6.500 6.500-6.500M6 10q0-4 4-4" strokeWidth=".9" /><path d="M8 10q0-2 2-2v2z" fill="currentColor" /></Ico></TrayButton>
          <TrayButton aria-label="Battery"><Ico w={12} h={9}><path d="M3 3h7.500v4.500H1.500V6" /><path d="M6 4.500h3.500V6H6z" fill="currentColor" /><path d="M11.500 4v2.500M1 1v2.500h2.500V1M2.200 3.500V6" /></Ico></TrayButton>
          <TrayStack $w={20}>ENG<br />IN</TrayStack>
          <TrayStack $w={38}>6:41 PM<br />8/5/2023</TrayStack>
          <TrayButton aria-label="Notifications"><Ico w={18} h={14}><path d="M7.500 1.500h9.500v9h-3l-2 2v-2H7.500z" /></Ico></TrayButton>
        </Tray>
      </Taskbar>
    </Screen>
  );
}
